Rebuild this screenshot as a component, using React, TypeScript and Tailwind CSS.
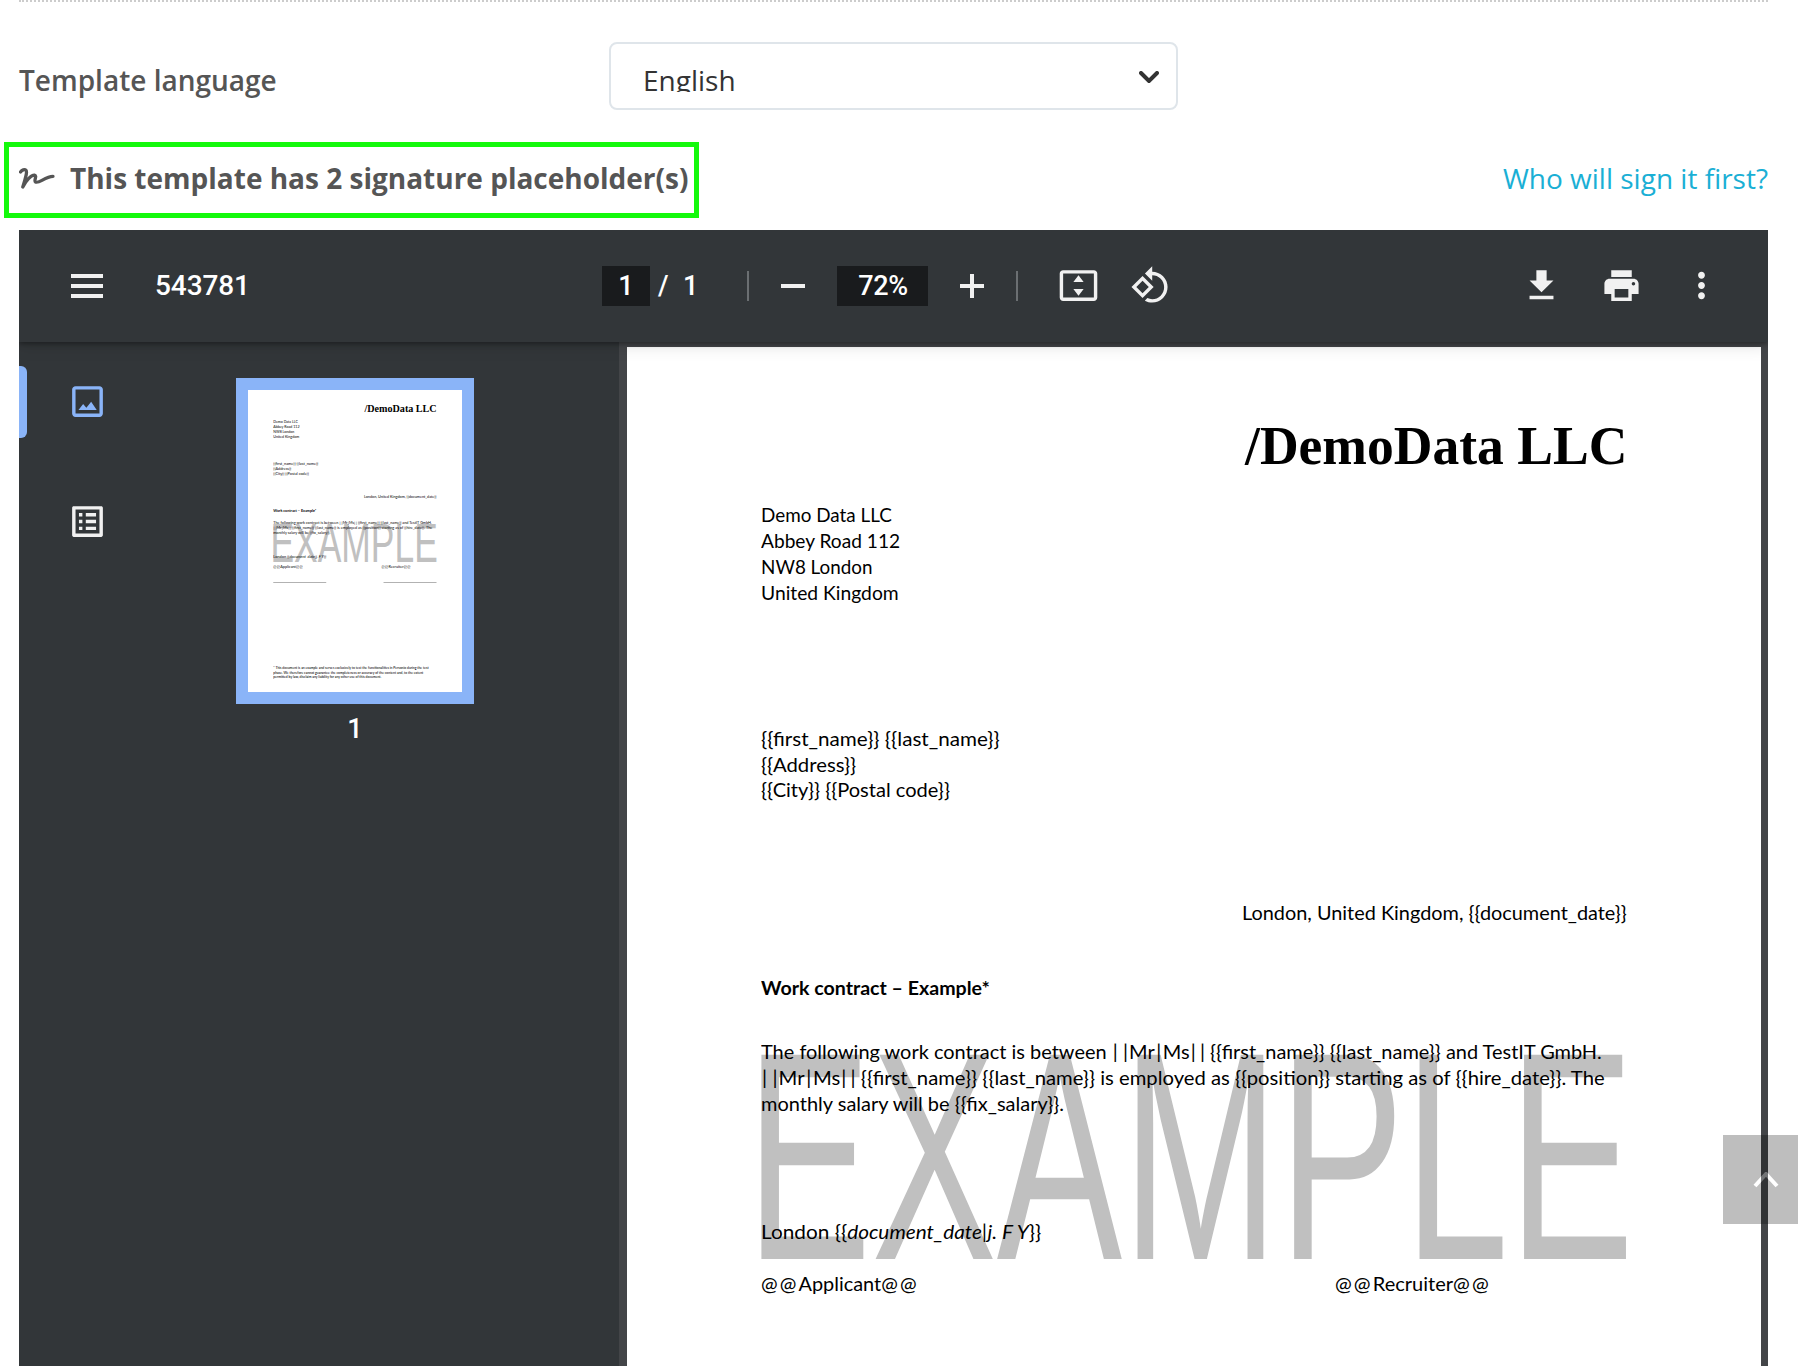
import { ReactNode, useLayoutEffect, useRef } from "react";

/** One line of print whose set width is fixed by the document. */
function Line({ width, className = "", children }: { width: number; className?: string; children: ReactNode }) {
  const ref = useRef<HTMLSpanElement>(null);
  useLayoutEffect(() => {
    const el = ref.current;
    if (el && el.offsetWidth > 0) el.style.transform = `scaleX(${width / el.offsetWidth})`;
  }, [width]);
  return (
    <div className={`whitespace-pre ${className}`} style={{ width }}>
      <span ref={ref} className="inline-block origin-left">
        {children}
      </span>
    </div>
  );
}

/** Salutation switch, set with widely spaced bars. */
function Salutation() {
  return (
    <>
      <span className="pl-[1px] tracking-[5px]">|</span>
      <span className="pr-[1px]">|</span>Mr<span className="px-[1.5px]">|</span>Ms
      <span className="pl-[1px] tracking-[4px]">|</span>
      <span>|</span>
    </>
  );
}

function Icon({ d, className = "" }: { d: string; className?: string }) {
  return (
    <svg viewBox="0 0 24 24" className={`size-[41px] shrink-0 fill-current ${className}`}>
      <path d={d} />
    </svg>
  );
}

const ICONS = {
  fit: "M21 3H3c-1.1 0-2 .9-2 2v14c0 1.1.9 2 2 2h18c1.1 0 2-.9 2-2V5c0-1.1-.9-2-2-2zm0 16H3V5h18v14zM12 6l-3 4h6zM12 18l3-4H9z",
  rotate:
    "M7.34 6.41L.86 12.9l6.49 6.48 6.49-6.48-6.5-6.49zM3.69 12.9l3.66-3.66L11 12.9l-3.66 3.66-3.65-3.66zm15.67-6.26C17.61 4.88 15.3 4 13 4V.76L8.76 5 13 9.24V6c1.79 0 3.58.68 4.95 2.05 2.73 2.73 2.73 7.17 0 9.9C16.58 19.32 14.79 20 13 20c-.97 0-1.94-.21-2.84-.61l-1.49 1.49C10.02 21.62 11.51 22 13 22c2.3 0 4.61-.88 6.36-2.64 3.52-3.51 3.52-9.21 0-12.72z",
  download: "M19 9h-4V3H9v6H5l7 7 7-7zM5 18v2h14v-2H5z",
  print:
    "M19 8H5c-1.66 0-3 1.34-3 3v6h4v4h12v-4h4v-6c0-1.66-1.34-3-3-3zm-3 11H8v-5h8v5zm3-7c-.55 0-1-.45-1-1s.45-1 1-1 1 .45 1 1-.45 1-1 1zm-1-9H6v4h12V3z",
  more: "M12 8c1.1 0 2-.9 2-2s-.9-2-2-2-2 .9-2 2 .9 2 2 2zm0 2c-1.1 0-2 .9-2 2s.9 2 2 2 2-.9 2-2-.9-2-2-2zm0 6c-1.1 0-2 .9-2 2s.9 2 2 2 2-.9 2-2-.9-2-2-2z",
  image:
    "M19 5v14H5V5h14m0-2H5c-1.1 0-2 .9-2 2v14c0 1.1.9 2 2 2h14c1.1 0 2-.9 2-2V5c0-1.1-.9-2-2-2zm-4.86 9.2l-2.8 3.5-1.9-2.3L6.7 17h10.7z",
  list: "M19 5v14H5V5h14m1.1-2H3.9c-.5 0-.9.4-.9.9v16.2c0 .4.4.9.9.9h16.2c.4 0 .9-.5.9-.9V3.9c0-.5-.5-.9-.9-.9zM11 7h6v2h-6V7zm0 4h6v2h-6v-2zm0 4h6v2h-6zM7 7h2v2H7zm0 4h2v2H7zm0 4h2v2H7z",
};

function ContractPage() {
  return (
    <div className="relative h-[1605px] w-[1134px] shrink-0 bg-white pt-[69px] pl-[134px] font-['Lato','Noto_Sans',sans-serif] text-[19px] leading-[26px] text-black">
      <div className="absolute top-[659px] left-[119px] font-['Liberation_Sans',sans-serif] text-[297px] leading-[300px] text-[#c0c0c0]">
        <Line width={888}>EXAMPLE</Line>
      </div>
      <div className="relative w-[866px]">
        <Line width={382} className="ml-auto font-['Liberation_Serif',serif] text-[54px] leading-[60px] font-bold">
          /DemoData LLC
        </Line>
        <div className="mt-[26px]">
          <Line width={131}>Demo Data LLC</Line>
          <Line width={139}>Abbey Road 112</Line>
          <Line width={112}>NW8 London</Line>
          <Line width={138}>United Kingdom</Line>
        </div>
        <div className="mt-[120px] leading-[25.7px]">
          <Line width={239}>{"{{first_name}} {{last_name}}"}</Line>
          <Line width={95}>{"{{Address}}"}</Line>
          <Line width={189}>{"{{City}} {{Postal code}}"}</Line>
        </div>
        <Line width={385} className="mt-[97px] ml-auto">
          {"London, United Kingdom, {{document_date}}"}
        </Line>
        <Line width={229} className="mt-[49px] font-bold">
          Work contract – Example*
        </Line>
        <div className="mt-[38px]">
          <Line width={841}>
            The following work contract is between <Salutation />
            {" {{first_name}} {{last_name}} and TestIT GmbH."}
          </Line>
          <Line width={844}>
            <Salutation />
            {" {{first_name}} {{last_name}} is employed as {{position}} starting as of {{hire_date}}. The"}
          </Line>
          <Line width={303}>{"monthly salary will be {{fix_salary}}."}</Line>
        </div>
        <Line width={280} className="mt-[102px]">
          {"London {{"}
          <i>document_date|j. F Y</i>
          {"}}"}
        </Line>
        <div className="mt-[26px] flex">
          <Line width={156}>
            <span className="tracking-[2px]">@@</span>Applicant<span className="tracking-[2px]">@</span>@
          </Line>
          <Line width={154} className="ml-[418px]">
            <span className="tracking-[2px]">@@</span>Recruiter<span className="tracking-[2px]">@</span>@
          </Line>
        </div>
        <div className="mt-[70px] flex justify-between">
          <div className="w-[281px] border-b-3 border-[#777]" />
          <div className="w-[281px] border-b-3 border-[#777]" />
        </div>
        <div className="mt-[442px] text-[16px] leading-[22px] font-medium">
          <Line width={824}>* This document is an example and serves exclusively to test the functionalities in Personio during the test</Line>
          <Line width={796}>phase. We therefore cannot guarantee the completeness or accuracy of the content and, to the extent</Line>
          <Line width={573}>permitted by law, disclaim any liability for any other use of this document.</Line>
        </div>
      </div>
    </div>
  );
}

function Toolbar() {
  return (
    <div className="relative z-10 flex h-[112px] shrink-0 items-center bg-[#323639] text-[#f1f1f1] shadow-[0_2px_5px_rgba(0,0,0,0.35),0_4px_16px_rgba(0,0,0,0.12)]">
      <div className="ml-[52px] flex w-8 flex-col gap-[6px]">
        <div className="h-1 bg-current" />
        <div className="h-1 bg-current" />
        <div className="h-1 bg-current" />
      </div>
      <div className="ml-[52px] w-[447px] text-[28px] font-medium tracking-[-0.1px] text-white">543781</div>
      <div className="flex h-10 w-12 items-center justify-center bg-[#191b1d] text-[27px] font-medium text-white">1</div>
      <div className="ml-[8px] w-[25px] text-[27px] font-medium text-white">/</div>
      <div className="w-[64px] text-[27px] font-medium text-white">1</div>
      <div className="h-[30px] w-[2px] bg-[#6b6f72]" />
      <div className="ml-[32px] h-[4px] w-6 bg-[#f1f1f1]" />
      <div className="ml-[32px] flex h-10 w-[91px] items-center justify-center bg-[#191b1d] pl-[1px] text-[27px] font-medium tracking-[-0.3px] text-white">
        72%
      </div>
      <svg viewBox="0 0 24 24" className="ml-[32px] size-6 shrink-0 fill-current">
        <path d="M10 0h4v10h10v4H14v10h-4V14H0v-4h10z" />
      </svg>
      <div className="ml-[32px] h-[30px] w-[2px] bg-[#6b6f72]" />
      <Icon d={ICONS.fit} className="-mt-[1px] ml-[40px]" />
      <Icon d={ICONS.rotate} className="-mt-[2px] ml-[30.5px]" />
      <div className="-mt-[1px] mr-[46.5px] ml-auto flex gap-[39px]">
        <Icon d={ICONS.download} />
        <Icon d={ICONS.print} />
        <Icon d={ICONS.more} />
      </div>
    </div>
  );
}

function Sidebar() {
  return (
    <div className="flex w-[600px] shrink-0 bg-[#323639]">
      <div className="mt-[24px] h-[72px] w-2 rounded-r-[6px] bg-[#8ab4f8]" />
      <div className="mt-[39px] ml-[39.5px] flex flex-col gap-[79px]">
        <Icon d={ICONS.image} className="text-[#8ab4f8]" />
        <Icon d={ICONS.list} className="text-[#f1f1f1]" />
      </div>
      <div className="mt-[36px] ml-[128.5px] flex flex-col items-center">
        <div className="h-[326px] w-[238px] bg-[#8ab4f8] p-3">
          <div className="h-[302px] w-[214px] overflow-hidden bg-white">
            <div className="w-[1134px] origin-top-left scale-[0.1885]">
              <ContractPage />
            </div>
          </div>
        </div>
        <div className="mt-[5px] text-[27px] leading-10 font-medium text-white">1</div>
      </div>
    </div>
  );
}

export default function App() {
  return (
    <div className="relative flex h-[1366px] w-[1798px] flex-col overflow-hidden bg-white font-['Open_Sans',sans-serif] text-[28px] text-[#555]">
      <div className="mr-[30px] ml-[19px] border-t-2 border-dotted border-[#ccc]" />
      <div className="mt-[40px] flex h-[68px] items-center pl-[19px]">
        <div className="mt-[7px] w-[590px] leading-[40px] font-semibold">Template language</div>
        <div className="flex h-[68px] w-[569px] justify-between rounded-lg border-2 border-[#dfe5ea] pr-[17px] pl-[32px]">
          <div className="mt-[18px] h-[30px] overflow-hidden leading-[36px] text-[#333]">English</div>
          <svg viewBox="0 0 20 12" className="mt-[27px] h-3 w-5 fill-none stroke-[#333]">
            <path d="M2 2l8 8 8-8" strokeWidth="4" strokeLinecap="round" />
          </svg>
        </div>
      </div>
      <div className="mt-[32px] flex h-[76px] items-center justify-between pr-[30px] pl-1">
        <div className="flex h-[76px] w-[695px] items-center border-5 border-[#14f90c] pl-[10px]">
          <svg viewBox="0 0 36 22" className="-mt-[2px] h-[22px] w-9 shrink-0 fill-none stroke-[#555]">
            <path
              d="M1.5 4C3 2 5.500 1 7 2.200C8.500 4 6.500 10 3.800 19C7 12.500 12 7 15.500 7.200C18.500 7.800 14.500 12.500 16.500 14C20 16 26 8.500 34 8.300"
              strokeWidth="3.3"
              strokeLinecap="round"
              strokeLinejoin="round"
            />
          </svg>
          <div className="-mt-[5px] ml-[15px] font-bold whitespace-nowrap">This template has 2 signature placeholder(s)</div>
        </div>
        <div className="-mt-[5px] text-[#1aafd5]">Who will sign it first?</div>
      </div>
      <div className="mt-[12px] mr-[30px] ml-[19px] flex flex-1 flex-col overflow-hidden font-['Roboto',sans-serif]">
        <Toolbar />
        <div className="flex h-[1024px] overflow-hidden">
          <Sidebar />
          <div className="flex flex-1 items-start bg-[#434548] pt-[5px] pl-[8px]">
            <ContractPage />
          </div>
        </div>
      </div>
      <button className="absolute top-[1135px] right-0 flex h-[89px] w-[75px] items-center justify-center bg-black opacity-25">
        <svg viewBox="0 0 26 16" className="ml-[10px] h-4 w-[26px] fill-none stroke-white">
          <path d="M2 14L13 2l11 12" strokeWidth="4" />
        </svg>
      </button>
    </div>
  );
}
